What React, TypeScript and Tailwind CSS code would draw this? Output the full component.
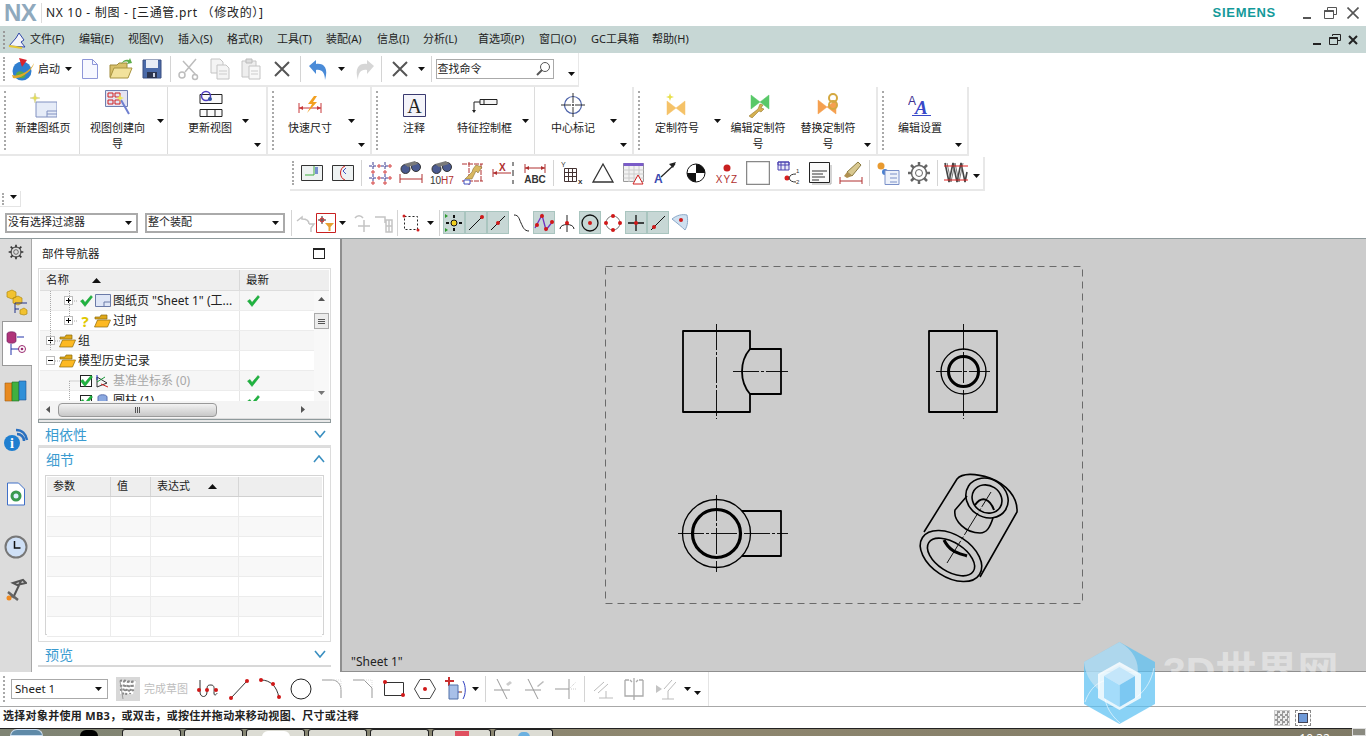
import type { ReactNode } from "react"

const Caret = ({ dim }: { dim?: boolean }) => (
  <svg width="7" height="4" viewBox="0 0 7 4" className="shrink-0"><path d="M0 0h7L3.5 4z" fill={dim ? "#777" : "#111"} /></svg>
)
const Grip = () => <div className="my-1 w-[3px] shrink-0 self-stretch border-l-2 border-dotted border-[#a9a9a9]" />
const Sep = () => (
  <div className="flex h-[26px] w-[6px] shrink-0 justify-center"><div className="h-full w-px bg-[#d4d4d4]" /></div>
)
const Ic = ({ children, w = 24, h = 24 }: { children: ReactNode; w?: number; h?: number }) => (
  <svg width={w} height={h} viewBox={`0 0 ${w} ${h}`} fill="none" className="shrink-0">{children}</svg>
)
const Slot = ({ children, on }: { children?: ReactNode; on?: boolean }) => (
  <div className={on ? "flex h-[23px] w-[22px] shrink-0 items-center justify-center border border-[#a9c5bf] bg-[#c7d7d5]" : "flex h-[26px] w-[31px] shrink-0 items-center justify-center"}>{children}</div>
)

/* toolbar pictures */
const Globe = () => (
  <Ic><circle cx="11" cy="14" r="9.5" fill="#2f7fd0" /><path d="M5 17c2-4 7-3 9 0s-2 5-5 4-5-2-4-4z" fill="#5aa84a" /><path d="M1 18c6 2 18-3 22-12-1 7-13 17-21 15z" fill="#e0a92c" /><path d="M8 1l8 2-5 7z" fill="#d9232e" /></Ic>
)
const Doc = () => <Ic w={18} h={22}><path d="M1.500 1.500h10l5 5v14h-15z" fill="#f7f8ff" stroke="#8e96d8" /><path d="M11.500 1.500v5h5" stroke="#8e96d8" /></Ic>
const Open = () => <Ic><path d="M1 8h7l2-2h8v14H1z" fill="#d8c06a" stroke="#a08a3a" /><path d="M1 21l4-10h18l-4 10z" fill="#f2e29c" stroke="#a89440" /><path d="M12 7c2-4 5-5 8-4l1-2 2 5-5 1 1-2c-3-1-5 0-7 2z" fill="#5cad4a" /></Ic>
const Save = () => <Ic w={20} h={20}><path d="M1 1h18v18H1z" fill="#4a6aa8" stroke="#3b4f80" /><path d="M4 1h12v8H4z" fill="#e8edf6" /><path d="M5 13h10v6H5z" fill="#2c3550" /><path d="M11 14h2v4h-2z" fill="#cdd5e6" /></Ic>
const Scissors = () => <Ic><g stroke="#bdbdbd" strokeWidth="1.500"><path d="M19 2L8 15M6 4l13 14" /><circle cx="5" cy="18" r="3" /><circle cx="18" cy="20" r="2.500" /></g></Ic>
const Copy = () => <Ic><g stroke="#c4c4c4" fill="#f4f4f4"><path d="M3 2h9l3 3v11H3z" /><path d="M9 8h9l3 3v11H9z" /></g><path d="M11 14h8M11 17h8" stroke="#ccc" /></Ic>
const Paste = () => <Ic><path d="M3 4h14v16H3z" fill="#eee" stroke="#c4c4c4" /><path d="M7 2h6v4H7z" fill="#ddd" stroke="#bbb" /><path d="M10 9h11v13H10z" fill="#f8f8f8" stroke="#c4c4c4" /><path d="M12 14h7M12 17h7" stroke="#ccc" /></Ic>
const XMark = () => <Ic w={20} h={20}><path d="M3 3l14 14M17 3L3 17" stroke="#555" strokeWidth="2" /></Ic>
const Undo = () => <Ic><path d="M2 9l7-6v4c7-1 13 3 9 16 0-7-3-11-9-10v4z" fill="#4a8bd8" /></Ic>
const Redo = () => <Ic><path d="M22 9l-7-6v4C8 6 2 10 6 23c0-7 3-11 9-10v4z" fill="#d6d6d6" /></Ic>
const NewSheet = () => <Ic w={28} h={28}><path d="M7 11h21v15H7z" fill="#e6ecf8" stroke="#8090c0" /><path d="M18 20h10M18 23h10M18 20v6" stroke="#8090c0" /><path d="M6 2l1 4 4 1-4 1-1 4-1-4-4-1 4-1z" fill="#e8e04a" stroke="#c9c9a0" strokeWidth=".5" /></Ic>
const ViewWiz = () => <Ic w={26} h={30}><path d="M.5.500h22v16H.5z" fill="#e4e4f2" stroke="#7080b0" /><g stroke="#d02020" fill="none"><path d="M3 3h5v4H3zM10 3h5v4h-5zM3 10h5v4H3zM10 10h5v4h-5z" /></g><path d="M16 10l8 14" stroke="#7080d0" strokeWidth="2" /><path d="M15 4l1 3 3 1-3 1-1 3-1-3-3-1 3-1z" fill="#ece85a" /></Ic>
const UpdView = () => <Ic w={26} h={30}><path d="M3 4.500h22v9H3zM3 19.500h22v7H3zM10 19.500v7M18 19.500v7" stroke="#222" fill="#fafafa" /><circle cx="9" cy="6" r="4.500" stroke="#5040c0" strokeWidth="1.500" /><circle cx="13" cy="9" r="2" fill="#3050a0" /></Ic>
const QuickDim = () => <Ic w={24} h={20}><path d="M1 8v10M23 8v10M1 13h22" stroke="#c8383a" /><path d="M1 13l4-2v4zM23 13l-4-2v4z" fill="#c8383a" /><path d="M16 1l-6 8h4l-5 9 10-11h-4l4-6z" fill="#f2a020" /></Ic>
const NoteA = () => <Ic w={23} h={23}><path d="M.5.500h22v22H.5z" fill="#f4f4fa" stroke="#3a3a70" /><text x="11.500" y="19" textAnchor="middle" fontFamily="Liberation Serif" fontSize="20" fill="#222">A</text></Ic>
const Fcf = () => <Ic w={26} h={20}><path d="M8 4.500h17v5H8z" fill="#f4f4f4" stroke="#222" /><path d="M12 4.500v5" stroke="#222" /><path d="M8 7H2v9" stroke="#222" /><path d="M0 15h4l-2 3z" fill="#222" /></Ic>
const Center = () => <Ic w={24} h={24}><circle cx="12" cy="12" r="8.500" stroke="#4a60a8" strokeWidth="1.200" /><path d="M12 0v10M12 14v10M0 12h10M14 12h10" stroke="#333" /><circle cx="12" cy="12" r="1" fill="#333" /></Ic>
const Bow = ({ c }: { c: string }) => <path d="M2 6l9 7-9 7zM20 6l-9 7 9 7z" fill={c} stroke={c} strokeWidth=".5" />
const DefSym = () => <Ic w={24} h={26}><g transform="translate(0 3)"><Bow c="#f5c268" /></g><path d="M5 1l1 3 3 1-3 1-1 3-1-3-3-1 3-1z" fill="#e8e04a" /></Ic>
const EditSym = () => <Ic w={24} h={26}><g transform="translate(3 -3)"><Bow c="#58c868" /></g><path d="M3 24l9-7 2-5 3 1-2 3 3 1-3 3-2-1-7 7z" fill="#d4b050" stroke="#8a6a20" strokeWidth=".5" /></Ic>
const SwapSym = () => <Ic w={24} h={26}><g transform="translate(0 2)"><Bow c="#f5a050" /></g><circle cx="17" cy="6" r="4" stroke="#d4a840" strokeWidth="2" /><circle cx="17" cy="13" r="4" stroke="#d4a840" strokeWidth="2" /></Ic>
const EditSet = () => <Ic w={24} h={24}><text x="0" y="12" fontFamily="Liberation Sans" fontSize="12" fill="#403090">A</text><text x="7" y="21" fontFamily="Liberation Serif" fontWeight="bold" fontStyle="italic" fontSize="19" fill="#3848c8">A</text><path d="M4 22.500h19" stroke="#3848c8" /></Ic>

const BoxPic = ({ children }: { children: ReactNode }) => <Ic><path d="M1.500 4.500h21v15h-21z" fill="#eef2f2" stroke="#333" />{children}</Ic>
const R1 = () => <BoxPic><path d="M14 5v9H5" stroke="#40b040" /><path d="M15 6h3v7h-3z" fill="#7890d0" /></BoxPic>
const R2 = () => <BoxPic><path d="M14 5c-6 2-6 12 0 14" stroke="#d02020" /><path d="M15 7l-3 3 3 3" stroke="#4050c0" /></BoxPic>
const R3 = () => <Ic><g stroke="#3a3a90"><path d="M1 5h7M13 5h7M5 1v8M17 1v8M1 17h7M13 17h7M5 13v8M17 13v8" strokeDasharray="3 1" /></g><g fill="none" stroke="#d03030"><circle cx="11" cy="5" r="1.200" /><circle cx="22" cy="5" r="1.200" /><circle cx="5" cy="11" r="1.200" /><circle cx="17" cy="11" r="1.200" /><circle cx="11" cy="17" r="1.200" /><circle cx="22" cy="17" r="1.200" /><circle cx="5" cy="22" r="1.200" /><circle cx="17" cy="22" r="1.200" /></g></Ic>
const Binoc = () => <g><circle cx="6.500" cy="8" r="4.500" fill="#4a5a90" stroke="#333" /><circle cx="17" cy="6" r="4.500" fill="#4a5a90" stroke="#333" /><path d="M5 3l11-3 3 3-10 3z" fill="#7a7a7a" /></g>
const R4 = () => <Ic><Binoc /><path d="M1 13v9M23 13v9M1 18h22" stroke="#b03030" /></Ic>
const R5 = () => <Ic><Binoc /><text x="0" y="23" fontFamily="Liberation Sans" fontSize="10" fill="#333">10</text><text x="11" y="23" fontFamily="Liberation Sans" fontSize="10" fill="#b03030">H7</text></Ic>
const R6 = () => <Ic><path d="M1 3h21M20 3v18M1 20h21M8 1v23" stroke="#b03030" strokeDasharray="5 1" /><path d="M4 18h7l4-8 2 2 4-6-6-2-3 4-1 3-7 7z" fill="#d8b860" stroke="#7a6020" strokeWidth=".5" /><path d="M3 19h6v4H3z" stroke="#4050c0" fill="#fff" /></Ic>
const R7 = () => <Ic><path d="M1 8v8M1 12h18" stroke="#b03030" /><path d="M1 12l4-2v4z" fill="#b03030" /><path d="M21 1v4M21 9v6M21 19v4" stroke="#222" /><text x="7" y="10" fontFamily="Liberation Sans" fontSize="10" fontWeight="bold" fill="#b03030">X</text></Ic>
const R8 = () => <Ic><path d="M2 3v9M22 3v9M2 7h20" stroke="#b03030" /><path d="M2 7l4-2v4zM22 7l-4-2v4z" fill="#b03030" /><text x="12" y="22" textAnchor="middle" fontFamily="Liberation Sans" fontSize="10" fontWeight="bold" fill="#333">ABC</text></Ic>
const R9 = () => <Ic><text x="1" y="6" fontFamily="Liberation Sans" fontSize="7" fill="#333">Y</text><path d="M4.500 7.500h12v13h-12zM8.500 7.500v13M12.500 7.500v13M4.500 11.500h12M4.500 15.500h12" stroke="#433" /><text x="18" y="23" fontFamily="Liberation Sans" fontSize="8" fontWeight="bold" fill="#333">x</text></Ic>
const R10 = () => <Ic><path d="M12 3L2 21h20z" stroke="#333" strokeWidth="1.300" /></Ic>
const R11 = () => <Ic><path d="M1.500 2.500h20v18h-20z" fill="#f2f2f2" stroke="#999" /><path d="M1.500 2h20v3h-20z" fill="#7a5cc8" /><path d="M1.500 9h20M1.500 13h20M1.500 17h20M7 5v16M12 5v16M17 5v16" stroke="#ccc" /><path d="M16 14l-5 9h10z" fill="#fff" stroke="#d02020" /></Ic>
const R12 = () => <Ic><path d="M8 16L22 3" stroke="#222" strokeWidth="1.200" /><path d="M23 1l-7 2 4 4z" fill="#222" /><text x="1" y="22" fontFamily="Liberation Sans" fontWeight="bold" fontSize="12" fill="#3a4ab0">A</text></Ic>
const R13 = () => <Ic><circle cx="12" cy="12" r="9" fill="#fff" stroke="#111" /><path d="M12 3a9 9 0 019 9h-9zM12 12v9a9 9 0 01-9-9z" fill="#111" /></Ic>
const R14 = () => <Ic><circle cx="12" cy="7" r="3.500" fill="#c82020" /><text x="12" y="22" textAnchor="middle" fontFamily="Liberation Sans" fontSize="10" fill="#b03030" letterSpacing="1">XYZ</text></Ic>
const R15 = () => <Ic><path d="M.5.500h23v23H.5z" fill="#fff" stroke="#888" strokeWidth="1.500" /></Ic>
const R16 = () => <Ic><path d="M1 1h11v8H1z" fill="#e8e8f8" stroke="#4a40b0" /><path d="M1 1h11v3H1zM4 1v8M8 1v8" stroke="#4a40b0" /><circle cx="10" cy="17" r="2.500" fill="#d82020" /><path d="M19 13c-4 0-6 1-7 4 1 3 3 4 7 4" stroke="#333" /><text x="19" y="12" fontSize="6" fontFamily="Liberation Sans" fill="#333">1</text><text x="19" y="23" fontSize="6" fontFamily="Liberation Sans" fill="#333">2</text></Ic>
const R17 = () => <Ic><path d="M1.500 1.500h20v20h-20z" fill="#fafafa" stroke="#222" /><path d="M4 10h15M4 13h11M4 16h13M4 19h7" stroke="#333" /><path d="M23 4v19H4" stroke="#aaa" /></Ic>
const R18 = () => <Ic><path d="M8 11L19 1l3 3-9 11z" fill="#d8c890" stroke="#8a7a40" /><path d="M8 11l5 4-5 2-3-2z" fill="#b09050" /><path d="M1 16v7M23 16v7M1 20h22" stroke="#b03030" /></Ic>
const R19 = () => <Ic><circle cx="5" cy="5" r="3.500" fill="#e89a30" /><circle cx="9" cy="11" r="3" fill="#4a80d0" /><path d="M9 9.500h14v14H9z" fill="#eef2fa" stroke="#7a90c8" /><path d="M14 13h7M14 17h7M14 21h7" stroke="#7a90c8" /></Ic>
const Gear = ({ s = 24, c = "#666" }: { s?: number; c?: string }) => (
  <svg width={s} height={s} viewBox="0 0 24 24" fill="none" className="shrink-0"><circle cx="12" cy="12" r="7.500" stroke={c} strokeWidth="1.500" /><circle cx="12" cy="12" r="3.500" stroke={c} /><path d="M12 1v4M12 19v4M1 12h4M19 12h4M4 4l3 3M17 17l3 3M20 4l-3 3M7 17l-3 3" stroke={c} strokeWidth="2.500" /></svg>
)
const R21 = () => <Ic><path d="M1 2l4 19 4-19 4 19 4-19 4 19 2-10" stroke="#444" strokeWidth="1.600" /><path d="M3 2l4 19 4-19 4 19 4-19" stroke="#777" /><path d="M0 5h24M0 19h24" stroke="#e02020" /></Ic>

/* selection bar */
const Dimmed = ({ d }: { d: string }) => <Ic w={22} h={22}><path d={d} stroke="#c4c4c4" strokeWidth="1.500" /></Ic>
const SelFilter = () => <Ic w={20} h={20}><path d="M.5.500h19v19H.5z" stroke="#c82020" /><path d="M6 3v8M2 7h8" stroke="#333" /><circle cx="6" cy="7" r="2" stroke="#d02020" /><path d="M9 10h9l-3.500 4v4h-2v-4z" fill="#e8a030" /></Ic>
const Dash = () => <Ic w={20} h={20}><path d="M3.500 3.500h13v13h-13z" stroke="#222" strokeDasharray="2 2" /><circle cx="3" cy="3" r="1.500" fill="#d02020" /><circle cx="17" cy="17" r="1.500" fill="#d02020" /></Ic>
const Snap = ({ children }: { children: ReactNode }) => <Ic w={20} h={20}>{children}</Ic>
const Dot = ({ x, y, r = 2 }: { x: number; y: number; r?: number }) => <circle cx={x} cy={y} r={r} fill="#d01818" />

function Cell({ icon, label, w, caret, sep }: { icon: ReactNode; label: string; w: string; caret?: string; sep?: boolean }) {
  return (
    <div className={`relative flex h-full shrink-0 flex-col items-center pt-[3px] ${w} ${sep ? "border-r border-[#dcdcdc]" : ""}`}>
      <div className="flex h-[30px] items-center justify-center">{icon}</div>
      <div className="w-full whitespace-pre-line text-center text-[11px] leading-[16px] text-[#222]">{label}</div>
      {caret && <div className={`absolute top-[32px] ${caret}`}><Caret /></div>}
    </div>
  )
}

const Group = ({ w, children }: { w: string; children: ReactNode }) => (
  <div className={`relative flex h-[69px] shrink-0 items-stretch border-r-2 border-b-2 border-[#e8e8e8] pl-[4px] ${w}`}>
    <Grip />
    {children}
    <div className="absolute right-[5px] bottom-[7px]"><Caret /></div>
  </div>
)

const Check = () => <Ic w={13} h={12}><path d="M.5 6l2.500-1.500 2 3L11 .5l1.500 1.500L5 11.500z" fill="#1fb43f" stroke="#179a34" strokeWidth=".5" /></Ic>
const Folder = () => <Ic w={17} h={14}><path d="M1 3h5l1-2h6v4H1z" fill="#e0a818" stroke="#8a6a10" strokeWidth=".7" /><path d="M.5 13l3-7h13l-3 7z" fill="#fdb922" stroke="#8a6a10" strokeWidth=".7" /></Ic>
const Expander = ({ minus }: { minus?: boolean }) => (
  <div className="relative flex h-[9px] w-[9px] shrink-0 items-center justify-center border border-[#bbb] bg-white">
    <div className="h-px w-[5px] bg-black" />
    {!minus && <div className="absolute h-[5px] w-px bg-black" />}
  </div>
)

function TreeRow({ indent, grey, latest, children }: { indent: string; grey?: boolean; latest?: boolean; children: ReactNode }) {
  return (
    <div className={`flex h-[20px] shrink-0 border-b border-[#ececec] ${grey ? "bg-[#f6f6f6]" : "bg-white"}`}>
      <div className={`flex w-[200px] items-center overflow-hidden whitespace-nowrap border-r border-[#e6e6e6] text-[12px] text-[#222] ${indent}`}>{children}</div>
      <div className="flex flex-1 items-center pl-[7px]">{latest && <Check />}</div>
    </div>
  )
}

const Section = ({ title, up }: { title: string; up?: boolean }) => (
  <div className="flex h-[22px] shrink-0 items-center justify-between pr-[5px] pl-[7px] text-[14px] text-[#3a9bd0]">
    <span>{title}</span>
    <svg width="12" height="8" viewBox="0 0 12 8" fill="none"><path d={up ? "M1 7l5-6 5 6" : "M1 1l5 6 5-6"} stroke="#3a8fc0" strokeWidth="1.600" /></svg>
  </div>
)

const menus: [string, string, string][] = [
  ["文件", "(F)", "w-[49px]"], ["编辑", "(E)", "w-[49px]"], ["视图", "(V)", "w-[50px]"], ["插入", "(S)", "w-[49px]"],
  ["格式", "(R)", "w-[50px]"], ["工具", "(T)", "w-[49px]"], ["装配", "(A)", "w-[51px]"], ["信息", "(I)", "w-[46px]"],
  ["分析", "(L)", "w-[55px]"], ["首选项", "(P)", "w-[61px]"], ["窗口", "(O)", "w-[52px]"], ["GC工具箱", "", "w-[61px]"], ["帮助", "(H)", "w-[50px]"],
]

const navIcons: [ReactNode, string][] = [
  [<Gear key="g" s={16} c="#333" />, "h-[26px]"],
  [<Ic key="a" w={24} h={28}><path d="M3 3l5-2 4 2v5l-4 2-5-2zM9 9l5-2 4 2v5l-4 2-5-2z" fill="#f2c230" stroke="#b08a10" strokeWidth=".7" /><path d="M11 20v10M11 20h12M11 26h4" stroke="#223388" transform="translate(0 -6)" /><path d="M16 21l4-2 3 2v4l-3 1-4-1z" fill="#f2c230" stroke="#b08a10" strokeWidth=".7" /></Ic>, "h-[56px] pt-[20px]"],
  [<Ic key="t" w={24} h={28}><path d="M1 4c0-3 9-3 9 0v7c0 3-9 3-9 0z" fill="#b0347a" stroke="#702060" strokeWidth=".7" /><path d="M11 7h7M5 14v11M5 19h8" stroke="#2233aa" /><circle cx="16" cy="19" r="3.500" stroke="#9a2a70" /><circle cx="16" cy="19" r="1.300" fill="#9a2a70" /></Ic>, "h-[45px] bg-white border-y border-l border-[#999] ml-[2px] mr-[-1px] relative z-10"],
  [<Ic key="b" w={24} h={24}><path d="M1 5h7v18H1z" fill="#e88a20" stroke="#a05a10" strokeWidth=".6" /><path d="M8 4h7v19H8z" fill="#40b040" stroke="#207020" strokeWidth=".6" /><path d="M15 3h7v19h-7z" fill="#3090d8" stroke="#205090" strokeWidth=".6" /></Ic>, "h-[48px]"],
  [<Ic key="i" w={26} h={26}><path d="M13 3c6 0 10 4 11 10M14 7c4 0 7 3 7 7" stroke="#2a70c0" strokeWidth="2.500" /><circle cx="9" cy="16" r="8" fill="#1f7fd0" /><text x="9" y="21" textAnchor="middle" fontFamily="Liberation Serif" fontWeight="bold" fontSize="14" fill="#fff">i</text></Ic>, "h-[52px]"],
  [<Ic key="d" w={20} h={24}><path d="M1.500 1h11l6 6v16h-17z" fill="#fff" stroke="#4070c8" /><circle cx="10" cy="14" r="5.500" fill="#3a9a50" /><circle cx="10" cy="14" r="2.500" fill="#dff0ff" /></Ic>, "h-[56px]"],
  [<Ic key="c" w={24} h={24}><circle cx="12" cy="12" r="10.500" fill="#cfe0f6" stroke="#777" strokeWidth="2" /><path d="M10.500 6v7h6" stroke="#111" strokeWidth="1.500" /></Ic>, "h-[50px]"],
  [<Ic key="w" w={22} h={24}><path d="M16 3l-8 17M8 5l10-3 3 3-9 2z" stroke="#555" strokeWidth="2" /><path d="M3 14l10 8M3 20l4-2" stroke="#666" strokeWidth="2.500" /><circle cx="4" cy="20" r="2.500" fill="#f08a20" /></Ic>, "h-[36px]"],
]

function SheetDrawing() {
  return (
    <svg className="absolute inset-0" width="1024" height="432" viewBox="342 239 1024 432" fill="none">
      <path d="M605.500 266.500H1082.500V603.500H605.500Z" stroke="#6a6a6a" strokeDasharray="7 5" />
      <g stroke="#111" strokeWidth="1" strokeDasharray="26 2 3 2">
        <path d="M716.500 324V419M733 371.500H788" />
        <path d="M963.500 324V419M936 371.500H990" />
        <path d="M716.500 495V572M678 533.500H788" />
        <path d="M947 563L991 492" />
      </g>
      <g stroke="#000" strokeWidth="1.800" strokeLinejoin="round">
        <path d="M750 349V331H683V412H750V394" />
        <path d="M750 349H781V394H750C744 387 742 379 742 371.500C742 364 744 356 750 349Z" />
        <path d="M929 331H997V412H929Z" />
        <circle cx="963.500" cy="371.500" r="15" strokeWidth="3" />
        <path d="M742 511H781V556H742" />
      </g>
      <circle cx="963.500" cy="371.500" r="22.500" stroke="#000" strokeWidth="1.300" />
      <circle cx="716.500" cy="533.500" r="34" stroke="#000" strokeWidth="1.300" />
      <circle cx="716.500" cy="533.500" r="24" stroke="#000" strokeWidth="3.200" />
      <g stroke="#000" strokeWidth="1.600">
        <ellipse cx="951" cy="556" rx="34" ry="21" transform="rotate(33 951 556)" />
        <ellipse cx="951" cy="557" rx="26.500" ry="14.500" transform="rotate(33 951 557)" />
        <path d="M924 532L957 479C962 473 975 473 990 478C1006 484 1018 497 1017 512L980 577" />
        <ellipse cx="987" cy="498" rx="22" ry="19" transform="rotate(33 987 498)" />
        <ellipse cx="987" cy="499" rx="15.500" ry="13.500" transform="rotate(33 987 499)" />
        <path d="M967 496L955 510C953 521 966 533 980 533C987 533 990 527 993 518" />
        <path d="M975 505C982 495 990 499 994 510" strokeWidth="2" />
        <path d="M944 540C950 552 958 553 967 556" strokeWidth="3" />
      </g>
    </svg>
  )
}

function TaskTab({ children }: { children?: ReactNode }) {
  return <div className="flex h-full w-[59px] shrink-0 justify-center rounded-t-[3px] border border-b-0 border-[#222] bg-[#dcdcd4]">{children}</div>
}

export default function App() {
  return (
    <div className="relative flex h-[736px] w-[1366px] flex-col overflow-hidden bg-white font-['Noto_Sans','Noto_Sans_CJK_SC',sans-serif] text-[#222]">
      {/* title */}
      <div className="flex h-[26px] shrink-0 items-center">
        <span className="ml-[4px] w-[36px] font-['Liberation_Sans',sans-serif] text-[24px] font-bold leading-none tracking-[-0.5px] text-[#8fa9bd]">NX</span>
        <div className="ml-px h-[20px] w-px bg-[#ddd]" />
        <span className="ml-[4px] text-[12px] tracking-[0.7px]">NX 10 - 制图 - [三通管.prt （修改的）]</span>
        <span className="ml-auto font-['Liberation_Sans',sans-serif] text-[13px] font-bold tracking-[0.7px] text-[#139a9a]">SIEMENS</span>
        <div className="ml-[27px] flex w-[63px] items-center">
          <div className="mt-[9px] h-[2px] w-[8px] bg-[#555]" />
          <svg width="13" height="12" viewBox="0 0 13 12" fill="none" className="ml-[13px]"><path d="M3.500 3V.5h9v7H10M.5 3.500h9v8h-9z" stroke="#555" /><path d="M.5 4h9" stroke="#555" strokeWidth="2" /></svg>
          <svg width="12" height="12" viewBox="0 0 12 12" className="ml-[10px]"><path d="M.5.500l11 11M11.500.500l-11 11" stroke="#555" strokeWidth="1.600" /></svg>
        </div>
      </div>
      {/* menu */}
      <div className="flex h-[27px] shrink-0 items-center bg-[#c7d7d5] pl-[3px] text-[11px]">
        <div className="h-[18px] w-[2px] border-l-2 border-dotted border-[#999]" />
        <div className="ml-[3px] w-[22px]"><Ic w={18} h={18}><path d="M1 15l7-8 3-5 5 7-3 2 4 5z" fill="#f4f4fa" stroke="#3048a8" /><path d="M1 15l13 2" stroke="#e8c830" strokeWidth="2" /></Ic></div>
        {menus.map(([t, k, w]) => (
          <span key={t} className={`${w} shrink-0 whitespace-nowrap`}>{t}{k}</span>
        ))}
        <div className="ml-auto flex w-[53px] items-center">
          <div className="mt-[8px] h-[2px] w-[8px] bg-[#222]" />
          <svg width="12" height="11" viewBox="0 0 12 11" fill="none" className="ml-[8px]"><path d="M3.500 2V.5h8v6H9M.5 3.500h8v7h-8z" stroke="#222" /><path d="M.5 4h8" stroke="#222" strokeWidth="2" /></svg>
          <svg width="10" height="10" viewBox="0 0 10 10" className="ml-[7px]"><path d="M1 1l8 8M9 1l-8 8" stroke="#222" strokeWidth="2" /></svg>
        </div>
      </div>
      {/* standard toolbar */}
      <div className="flex h-[34px] w-[579px] shrink-0 items-center border-r border-b-2 border-[#e8e8e8] pl-[3px]">
        <Grip />
        <div className="ml-[5px]"><Globe /></div>
        <span className="ml-[3px] w-[27px] text-[11px]">启动</span>
        <Caret />
        <div className="w-[2.500px]" />
        <Slot><Doc /></Slot><Slot><Open /></Slot><Slot><Save /></Slot>
        <Sep />
        <Slot><Scissors /></Slot><Slot><Copy /></Slot><Slot><Paste /></Slot><Slot><XMark /></Slot>
        <Sep />
        <Slot><Undo /></Slot>
        <div className="flex w-[14px] justify-center"><Caret /></div>
        <div className="flex h-[26px] w-[30px] items-center justify-center"><Redo /></div>
        <Sep />
        <div className="flex h-[26px] w-[30px] items-center justify-center"><XMark /></div>
        <div className="flex w-[14px] justify-center"><Caret /></div>
        <Sep />
        <div className="ml-px flex h-[20px] w-[118px] items-center justify-between border border-[#aaa] pr-[2px] pl-[1px] text-[11px]">
          <span>查找命令</span>
          <svg width="16" height="16" viewBox="0 0 16 16" fill="none"><circle cx="10" cy="6" r="4.500" stroke="#555" /><path d="M7 9l-5 5" stroke="#555" strokeWidth="2" /></svg>
        </div>
        <div className="mt-[10px] ml-[14px]"><Caret /></div>
      </div>
      {/* drafting ribbon */}
      <div className="flex h-[69px] shrink-0">
        <Group w="w-[268px]">
          <Cell w="w-[73px]" sep icon={<NewSheet />} label="新建图纸页" />
          <Cell w="w-[88px] pr-[12px]" sep icon={<ViewWiz />} label={"视图创建向\n导"} caret="right-[3px]" />
          <Cell w="w-[96px] pr-[12px]" icon={<UpdView />} label="更新视图" caret="right-[15px]" />
        </Group>
        <Group w="w-[104px]">
          <Cell w="w-[70px]" icon={<QuickDim />} label="快速尺寸" caret="right-[-10px]" />
        </Group>
        <Group w="w-[262px]">
          <Cell w="w-[70px]" icon={<NoteA />} label="注释" />
          <Cell w="w-[86px] pr-[14px]" sep icon={<Fcf />} label="特征控制框" caret="right-[5px]" />
          <Cell w="w-[76px]" icon={<Center />} label="中心标记" caret="right-[-6px]" />
        </Group>
        <Group w="w-[244px]">
          <Cell w="w-[72px]" icon={<DefSym />} label="定制符号" caret="right-[-8px]" />
          <Cell w="w-[70px] ml-[10px]" icon={<EditSym />} label={"编辑定制符\n号"} />
          <Cell w="w-[70px]" icon={<SwapSym />} label={"替换定制符\n号"} />
        </Group>
        <Group w="w-[91px]">
          <Cell w="w-[70px]" icon={<EditSet />} label="编辑设置" />
        </Group>
      </div>
      {/* annotation toolbar */}
      <div className="mt-px flex h-[34px] w-[985px] shrink-0 justify-start pl-[290px]">
        <div className="flex h-full w-[695px] items-center border-r-2 border-b-2 border-[#e8e8e8] pl-[2px]">
          <Grip />
          <div className="w-px" />
          <Slot><R1 /></Slot><Slot><R2 /></Slot>
          <Sep />
          <Slot><R3 /></Slot><Slot><R4 /></Slot><Slot><R5 /></Slot><Slot><R6 /></Slot><Slot><R7 /></Slot><Slot><R8 /></Slot>
          <Sep />
          <Slot><R9 /></Slot><Slot><R10 /></Slot><Slot><R11 /></Slot><Slot><R12 /></Slot><Slot><R13 /></Slot><Slot><R14 /></Slot><Slot><R15 /></Slot><Slot><R16 /></Slot><Slot><R17 /></Slot><Slot><R18 /></Slot>
          <Sep />
          <Slot><R19 /></Slot><Slot><Gear /></Slot>
          <Sep />
          <Slot><R21 /></Slot>
          <div className="mt-[6px] ml-[2px]"><Caret /></div>
        </div>
      </div>
      {/* collapsed strip */}
      <div className="flex h-[16px] shrink-0">
        <div className="flex w-[21px] items-center border-r border-b border-[#e4e4e4] pl-[2px]">
          <div className="h-[12px] w-[2px] border-l-2 border-dotted border-[#aaa]" />
          <div className="ml-[6px] mb-[4px]"><Caret /></div>
        </div>
      </div>
      {/* selection bar */}
      <div className="flex h-[31px] shrink-0 items-center pl-[5px] text-[11px]">
        <div className="flex h-[20px] w-[133px] items-center justify-between border-2 border-[#aaa] pr-[4px] pl-[1px]"><span>没有选择过滤器</span><Caret /></div>
        <div className="ml-[7px] flex h-[20px] w-[140px] items-center justify-between border-2 border-[#aaa] pr-[4px] pl-[1px]"><span>整个装配</span><Caret /></div>
        <div className="w-[3px]" />
        <Sep />
        <div className="ml-px flex items-center">
          <Dimmed d="M2 9l5-4v2c4 0 7 1 7 5M14 12l5 0-3 4v4" />
          <div className="ml-[-1px]"><SelFilter /></div>
          <div className="ml-[3px]"><Caret /></div>
          <div className="ml-[4px]"><Dimmed d="M5 6c2-3 6-3 8 0M14 8v12M8 14h12" /></div>
          <Dimmed d="M3 5h10v6M14 8h6v12h-6zM17 8v12M14 14h6" />
        </div>
        <Sep />
        <div className="ml-px"><Dash /></div>
        <div className="ml-[6px]"><Caret /></div>
        <div className="w-[2px]" />
        <Sep />
        <div className="ml-px flex items-center">
          <Slot on><Snap><circle cx="10" cy="10" r="3" fill="#f0d020" stroke="#111" /><path d="M10 2v3M10 15v3M2 10h3M15 10h3" stroke="#111" strokeWidth="2" /><path d="M1 1l3 2-3 2zM1 15l3 2-3 2z" fill="#2a9a2a" /></Snap></Slot>
          <Slot on><Snap><path d="M3 17L16 4" stroke="#111" /><circle cx="16" cy="4" r="2" fill="#d01818" /></Snap></Slot>
          <Slot on><Snap><path d="M3 17L17 3" stroke="#111" /><circle cx="10" cy="10" r="2" fill="#d01818" /></Snap></Slot>
          <div className="flex w-[24px] justify-center"><Snap><path d="M3 2c5 0 5 4 7 8s3 8 8 8" stroke="#222" /></Snap></div>
          <Slot on><Snap><path d="M1 15L8 2l4 15 7-9" stroke="#7030c0" strokeWidth="1.300" /><Dot x={8} y={3} /><Dot x={3} y={12} /><Dot x={12} y={16} /><Dot x={18} y={9} /></Snap></Slot>
          <div className="flex w-[24px] justify-center"><Snap><path d="M3 16c0-6 14-6 14 0M10 2v17" stroke="#222" /><Dot x={10} y={10} /></Snap></div>
          <Slot on><Snap><circle cx="10" cy="10" r="8" stroke="#111" strokeWidth="1.300" /><Dot x={10} y={10} /></Snap></Slot>
          <div className="flex w-[24px] justify-center"><Snap><circle cx="10" cy="10" r="7" stroke="#777" /><Dot x={10} y={3} /><Dot x={17} y={10} /><Dot x={10} y={17} /><Dot x={3} y={10} /></Snap></div>
          <Slot on><Snap><path d="M10 2v16M2 10h16" stroke="#111" strokeWidth="1.300" /><Dot x={10} y={10} /></Snap></Slot>
          <Slot on><Snap><path d="M3 17L17 3" stroke="#111" /><Dot x={6} y={14} /></Snap></Slot>
          <div className="flex w-[22px] justify-center"><Snap><path d="M2 6c5-4 10-5 15-4 1 5 1 10-2 15-3-3-8-7-13-11z" fill="#cfe0f0" stroke="#8aa8c8" /><Dot x={11} y={7} /></Snap></div>
        </div>
      </div>
      {/* main */}
      <div className="flex h-[434px] shrink-0 border-t border-[#8f9a9c]">
        <div className="flex w-[32px] shrink-0 flex-col border-r border-[#a8a8a8] bg-[#dcdcdc]">
          {navIcons.map(([icon, cls], i) => (
            <div key={i} className={`flex shrink-0 items-center justify-center ${cls}`}>{icon}</div>
          ))}
        </div>
        <div className="flex w-[308px] shrink-0 flex-col overflow-hidden bg-white pr-[9px] pl-[6px]">
          <div className="flex h-[29px] shrink-0 items-center justify-between pr-[6px] pl-[4px] text-[11.500px]">
            <span>部件导航器</span>
            <div className="h-[11px] w-[12px] border border-t-2 border-[#222]" />
          </div>
          <div className="flex h-[151px] shrink-0 flex-col border border-[#dcdcdc] p-px">
            <div className="flex h-[21px] shrink-0 border-b border-[#ddd] bg-[#eeeeee] text-[11.500px]">
              <div className="flex w-[200px] items-center border-r border-[#d8d8d8] pl-[6px]">
                <span>名称</span>
                <svg width="9" height="5" viewBox="0 0 9 5" className="ml-[23px]"><path d="M0 5h9L4.500 0z" fill="#111" /></svg>
              </div>
              <div className="flex flex-1 items-center pl-[6px]">最新</div>
            </div>
            <div className="flex h-[110px] shrink-0">
              <div className="relative flex w-[274px] shrink-0 flex-col overflow-hidden">
                <TreeRow indent="pl-[24px]" grey latest><Expander /><div className="ml-[7px]"><Check /></div><div className="ml-[2px]"><Ic w={16} h={13}><path d="M.5.500h15v12H.5z" fill="#dfe6f6" stroke="#6a7aa8" /><path d="M9 8h7M9 8v5" stroke="#6a7aa8" /></Ic></div><span className="ml-[2px]">图纸页 "Sheet 1" (工...</span></TreeRow>
                <TreeRow indent="pl-[24px]"><Expander /><span className="ml-[7px] w-[10px] text-center text-[15px] font-bold leading-[18px] text-[#e0c800]">?</span><div className="ml-[4px]"><Folder /></div><span className="ml-[2px]">过时</span></TreeRow>
                <TreeRow indent="pl-[6px]" grey><Expander /><div className="ml-[4px]"><Folder /></div><span className="ml-[2px]">组</span></TreeRow>
                <TreeRow indent="pl-[6px]"><Expander minus /><div className="ml-[4px]"><Folder /></div><span className="ml-[2px]">模型历史记录</span></TreeRow>
                <TreeRow indent="pl-[40px]" grey latest><div className="flex h-[12px] w-[12px] items-center justify-center border border-[#222] bg-white"><Check /></div><div className="ml-[3px]"><Ic w={15} h={14}><path d="M2 3v10l10-4z" stroke="#333" /><path d="M2 8l8-5" stroke="#1a9a3a" /><path d="M2 1v5" stroke="#2030c0" /><path d="M6 10l7 3" stroke="#d02020" /></Ic></div><span className="ml-[3px] text-[#a8a8a8]">基准坐标系 (0)</span></TreeRow>
                <TreeRow indent="pl-[40px]" latest><div className="flex h-[12px] w-[12px] items-center justify-center border border-[#222] bg-white"><Check /></div><div className="ml-[3px]"><Ic w={15} h={14}><path d="M3 3c0-3 9-3 9 0v9c0 2-9 2-9 0z" fill="#8aa8e0" stroke="#5a70b0" /></Ic></div><span className="ml-[3px]">圆柱 (1)</span></TreeRow>
                <svg className="absolute inset-0" width="40" height="110" fill="none"><path d="M10.500 0V60M29.500 0V26M29.500 90V110M15 50H20M15 70H20M34 10H38M34 30H38M29.500 90H40" stroke="#aaa" strokeDasharray="1 1" /></svg>
              </div>
              <div className="flex w-[15px] shrink-0 flex-col items-center bg-[#f8f8f8] py-[6px]">
                <svg width="7" height="4" viewBox="0 0 7 4"><path d="M0 4h7L3.500 0z" fill="#555" /></svg>
                <div className="mt-[12px] flex h-[16px] w-[15px] flex-col items-center justify-center gap-px border border-[#aaa] bg-[#ececec]">
                  <div className="h-px w-[7px] bg-[#555]" /><div className="h-px w-[7px] bg-[#555]" /><div className="h-px w-[7px] bg-[#555]" />
                </div>
                <div className="mt-auto"><Caret dim /></div>
              </div>
            </div>
            <div className="flex h-[17px] shrink-0 items-center bg-[#f4f4f4] pl-[6px]">
              <svg width="4" height="7" viewBox="0 0 4 7"><path d="M4 0v7L0 3.500z" fill="#555" /></svg>
              <div className="ml-[8px] flex h-[14px] w-[159px] items-center justify-center gap-px rounded-sm border border-[#999] bg-gradient-to-b from-[#f2f2f2] to-[#c8c8c8]">
                <div className="h-[6px] w-px bg-[#555]" /><div className="h-[6px] w-px bg-[#555]" /><div className="h-[6px] w-px bg-[#555]" />
              </div>
              <svg width="4" height="7" viewBox="0 0 4 7" className="ml-[84px]"><path d="M0 0v7l4-3.500z" fill="#555" /></svg>
            </div>
          </div>
          <div className="h-[4px] shrink-0 border border-[#8f9a9c] bg-[#e8e8e8]" />
          <Section title="相依性" />
          <div className="h-[2px] shrink-0 bg-[#dedede]" />
          <div className="flex h-[195px] shrink-0 flex-col border border-[#dcdcdc]">
            <Section title="细节" up />
            <div className="mx-[6px] mt-[5px] flex h-[160px] flex-col border border-[#d4d4d4] p-px text-[11px]">
              <div className="grid h-[20px] shrink-0 grid-cols-[64px_40px_88px_1fr] border-b border-[#d0d0d0] bg-[#eeeeee]">
                <div className="flex items-center border-r border-[#d6d6d6] pl-[6px]">参数</div>
                <div className="flex items-center border-r border-[#d6d6d6] pl-[6px]">值</div>
                <div className="flex items-center border-r border-[#d6d6d6] pl-[6px]">表达式<svg width="9" height="5" viewBox="0 0 9 5" className="ml-[18px]"><path d="M0 5h9L4.500 0z" fill="#111" /></svg></div>
                <div />
              </div>
              {[0, 1, 2, 3, 4, 5, 6].map((r) => (
                <div key={r} className={`grid h-[20px] shrink-0 grid-cols-[64px_40px_88px_1fr] border-b border-[#ececec] ${r % 2 ? "bg-[#f8f8f8]" : "bg-white"}`}>
                  <div className="border-r border-[#ececec]" /><div className="border-r border-[#ececec]" /><div className="border-r border-[#ececec]" /><div />
                </div>
              ))}
            </div>
          </div>
          <div className="mt-[1px]"><Section title="预览" /></div>
          <div className="h-[2px] shrink-0 bg-[#d8d8d8]" />
        </div>
        <div className="relative flex-1 overflow-hidden border-b border-l-2 border-[#8f8f8f] bg-[#cccccc]">
          <SheetDrawing />
          <span className="absolute bottom-0 left-[9px] text-[12px] text-[#222]">"Sheet 1"</span>
        </div>
      </div>
      {/* sketch toolbar */}
      <div className="flex h-[35px] shrink-0 items-center border-b border-[#a8a8a8] pl-[3px] text-[11px]">
        <div className="flex h-full w-[706px] shrink-0 items-center border-r border-[#e4e4e4]">
          <Grip />
          <div className="ml-[5px] flex h-[20px] w-[97px] items-center justify-between border border-[#aaa] pr-[5px] pl-[3px]"><span className="text-[11.500px]">Sheet 1</span><Caret /></div>
          <div className="ml-[8px]"><Ic w={24} h={24}><path d="M0 0h24v24H0z" fill="#d8d8d8" /><path d="M4 4c5-2 8 2 16 0l-3 13c-5 1-8-2-13 0z" fill="#fff" /><path d="M4 4c5-2 8 2 16 0M8 3.500l-1 14M12 4l-2 14M16 4l-2 13M4 9c5-1 9 2 15-1M4 13c5-1 8 2 14 0" stroke="#888" strokeWidth="2" strokeDasharray="2 2" /><path d="M4 4L7 22" stroke="#999" /></Ic></div>
          <span className="ml-[4px] w-[48px] text-[#bdbdbd]">完成草图</span>
          <Slot><Ic w={22} h={22}><path d="M3 2v12c0 6 7 6 7 0s0-7 4-7 3 4 3 8 3 1 3 0" stroke="#333" /><Dot x={2} y={12} /><Dot x={10} y={12} /><Dot x={19} y={12} /></Ic></Slot>
          <Slot><Ic w={22} h={22}><path d="M3 20L19 3" stroke="#333" /><Dot x={3} y={20} /><Dot x={19} y={3} /></Ic></Slot>
          <Slot><Ic w={22} h={22}><path d="M2 2c9 0 16 6 18 18" stroke="#333" /><Dot x={2} y={2} /><Dot x={14} y={6} /><Dot x={20} y={19} /></Ic></Slot>
          <Slot><Ic w={22} h={22}><circle cx="11" cy="11" r="10" stroke="#222" /></Ic></Slot>
          <Slot><Ic w={22} h={22}><path d="M1 2h10c5 0 9 4 9 10v8" stroke="#999" /><path d="M11 2h9v10" stroke="#ddd" strokeDasharray="1 1" /></Ic></Slot>
          <Slot><Ic w={22} h={22}><path d="M1 2h11l8 8v10" stroke="#999" /><path d="M12 2h8v8" stroke="#ddd" strokeDasharray="1 1" /></Ic></Slot>
          <Slot><Ic w={22} h={22}><path d="M1.500 4.500h19v13h-19z" stroke="#333" /><Dot x={2} y={4} /><Dot x={20} y={17} /></Ic></Slot>
          <Slot><Ic w={22} h={22}><path d="M6 1.500h10l5.500 9.500L16 20.500H6L.5 11z" stroke="#444" /><Dot x={11} y={11} /></Ic></Slot>
          <Slot><Ic w={24} h={24}><path d="M1 4h9M5 0v9" stroke="#c83030" strokeWidth="2" /><path d="M5 8h9v14H5z" fill="#a8c0e8" stroke="#5070a8" /><path d="M14 15h4M19 4c3 5 3 13 0 18" stroke="#3040c0" /><path d="M15 15h3" stroke="#e88a20" /></Ic></Slot>
          <div className="flex w-[9px] justify-center"><Caret /></div>
          <div className="w-[2px]" />
          <Sep />
          <Slot><Ic w={22} h={22}><path d="M4 1l10 20M1 12h16" stroke="#999" /><path d="M13 6l4-3 2 2-4 3z" fill="#ccc" /></Ic></Slot>
          <Slot><Ic w={22} h={22}><path d="M4 1l10 20M1 12h16" stroke="#999" /><path d="M13 8l6-5 1 1-6 5z" fill="#bbb" /></Ic></Slot>
          <Slot><Ic w={22} h={22}><path d="M0 11h14M14 1v20" stroke="#999" /><path d="M14 11l7-7M14 11h7" stroke="#ccc" strokeDasharray="1 1" /></Ic></Slot>
          <Sep />
          <Slot><Ic w={22} h={22}><path d="M2 13l10-9M6 15l10-9M7 20h14M14 13v7" stroke="#bbb" /></Ic></Slot>
          <Slot><Ic w={22} h={22}><path d="M2 2h4M16 2h4M2 2v16h18V2M11 0v22M7 2l2 2M15 2l-2 2" stroke="#aaa" strokeWidth="1.300" /></Ic></Slot>
          <Slot><Ic w={22} h={22}><path d="M2 7l6 4-6 4z" fill="#c4c4c4" /><path d="M10 11l8-9M14 13l8-9M8 21h12M14 13v8" stroke="#bbb" /></Ic></Slot>
          <div className="flex w-[14px] justify-center"><Caret /></div>
          <div className="mt-[8px]"><Caret /></div>
        </div>
      </div>
      {/* status */}
      <div className="flex h-[21px] shrink-0 items-center pb-[2px] pl-[3px]">
        <span className="text-[11px] font-bold tracking-[0.3px]">选择对象并使用 MB3，或双击，或按住并拖动来移动视图、尺寸或注释</span>
        <div className="mt-[2px] mr-[55px] ml-auto flex items-center gap-[5px]">
          <div className="h-[16px] w-[16px] border border-[#ccc] bg-[#dcdcdc] [background-image:repeating-conic-gradient(#999_0_25%,#eee_0_50%)] [background-size:5px_5px]" />
          <div className="flex h-[16px] w-[16px] items-center justify-center border border-dashed border-[#888]"><div className="h-[10px] w-[10px] border border-[#445] bg-[#6f9ad8]" /></div>
        </div>
      </div>
      {/* taskbar */}
      <div className="flex h-[8px] shrink-0 items-stretch gap-[3px] border-t border-[#222] bg-gradient-to-r from-[#7f8474] via-[#8f876f] to-[#7f7a66] pl-[122px]">
        <div className="absolute bottom-0 left-[10px] h-[7px] w-[33px] rounded-t-full border border-[#cde] bg-[#5f8aa8]" />
        <div className="absolute bottom-0 left-[80px] h-[6px] w-[18px] rounded-t-full bg-black" />
        <TaskTab /><TaskTab /><TaskTab><div className="mt-[1px] h-[6px] w-[28px] rounded-t-full bg-white" /></TaskTab><TaskTab /><TaskTab /><TaskTab><div className="mt-[1px] h-[6px] w-[14px] bg-[#e05060]" /></TaskTab><TaskTab><div className="mt-[2px] h-[5px] w-[12px] rounded-t-full bg-[#6ab0e0]" /></TaskTab>
        <span className="absolute right-[36px] bottom-[-9px] text-[12px] leading-none text-white">10:32</span>
        <div className="absolute right-0 bottom-0 h-[8px] w-[14px] border border-[#ddd] bg-[#8a8a80]" />
      </div>
      {/* watermark */}
      <div className="pointer-events-none absolute top-[642px] left-[1083px] h-[82px] w-[73px]">
        <svg width="73" height="82" viewBox="0 0 73 82" fill="none">
          <path d="M36.500 0L72 20v42L36.500 82 1 62V20z" fill="#5cc0f2" fillOpacity=".72" />
          <path d="M1 20L36.500 0c14 8 20 20 18 33L36.500 23 17 33v16C6 40 2 30 1 20z" fill="#d8e8f0" fillOpacity=".55" />
          <path d="M2 60c6-16 14-20 22-22M37 81c-12-10-16-22-15-30M71 26C66 50 50 60 37 62" stroke="#fff" strokeOpacity=".6" />
          <path d="M36.500 20L58 32v24L36.500 68 15 56V32z" fill="#fff" fillOpacity=".8" />
          <path d="M36.500 25L52 34 36.500 43 21 34z" fill="#c4e6fa" />
          <path d="M21 34l15.500 9v22L21 56z" fill="#a4dcfa" />
          <path d="M52 34v22L36.500 65V43z" fill="#7cc8f2" />
        </svg>
      </div>
      <span className="pointer-events-none absolute top-[652px] left-[1163px] whitespace-nowrap font-['Liberation_Sans','Noto_Sans_CJK_SC',sans-serif] text-[41px] font-bold leading-none text-white/40">3D世界网</span>
    </div>
  )
}
